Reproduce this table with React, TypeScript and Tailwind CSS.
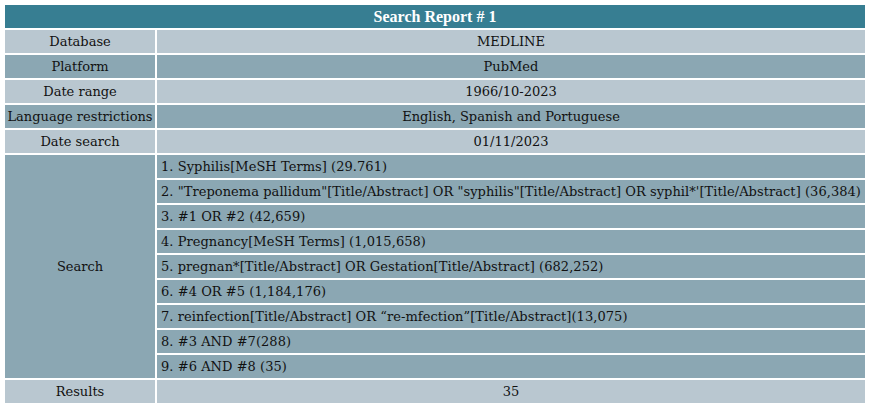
import React from "react";

const light = "bg-[#b9c7d0]";
const dark = "bg-[#8ba7b3]";

const rows: { label: string; value: string; bg: string }[] = [
  { label: "Database", value: "MEDLINE", bg: light },
  { label: "Platform", value: "PubMed", bg: dark },
  { label: "Date range", value: "1966/10-2023", bg: light },
  { label: "Language restrictions", value: "English, Spanish and Portuguese", bg: dark },
  { label: "Date search", value: "01/11/2023", bg: light },
];

const searches = [
  "1. Syphilis[MeSH Terms] (29.761)",
  "2. \"Treponema pallidum\"[Title/Abstract] OR \"syphilis\"[Title/Abstract] OR syphil*'[Title/Abstract] (36,384)",
  "3. #1 OR #2 (42,659)",
  "4. Pregnancy[MeSH Terms] (1,015,658)",
  "5. pregnan*[Title/Abstract] OR Gestation[Title/Abstract] (682,252)",
  "6. #4 OR #5 (1,184,176)",
  "7. reinfection[Title/Abstract] OR \u201cre-mfection\u201d[Title/Abstract](13,075)",
  "8. #3 AND #7(288)",
  "9. #6 AND #8 (35)",
];

export default function App() {
  return (
    <div
      className="w-[870px] h-[408px] bg-white p-[5px] flex flex-col gap-[2px] text-[13px] text-[#111] whitespace-nowrap"
      style={{ fontFamily: '"DejaVu Serif", serif' }}
    >
      <div
        className="h-[23px] bg-[#377e92] flex items-center justify-center text-white font-bold text-[16px]"
        style={{ fontFamily: '"Liberation Serif", serif' }}
      >
        Search Report # 1
      </div>
      {rows.map((r) => (
        <div key={r.label} className="grid grid-cols-[150px_1fr] gap-[2px] h-[23px]">
          <div className={`${r.bg} flex items-center justify-center`}>{r.label}</div>
          <div className={`${r.bg} flex items-center justify-center`}>{r.value}</div>
        </div>
      ))}
      <div className="grid grid-cols-[150px_1fr] gap-[2px]">
        <div className={`${dark} flex items-center justify-center`}>Search</div>
        <div className="flex flex-col gap-[2px]">
          {searches.map((s) => (
            <div key={s} className={`${dark} h-[23px] flex items-center pl-[4px] tracking-[0.05px]`}>
              {s}
            </div>
          ))}
        </div>
      </div>
      <div className="grid grid-cols-[150px_1fr] gap-[2px] h-[23px]">
        <div className={`${light} flex items-center justify-center`}>Results</div>
        <div className={`${light} flex items-center justify-center`}>35</div>
      </div>
    </div>
  );
}
